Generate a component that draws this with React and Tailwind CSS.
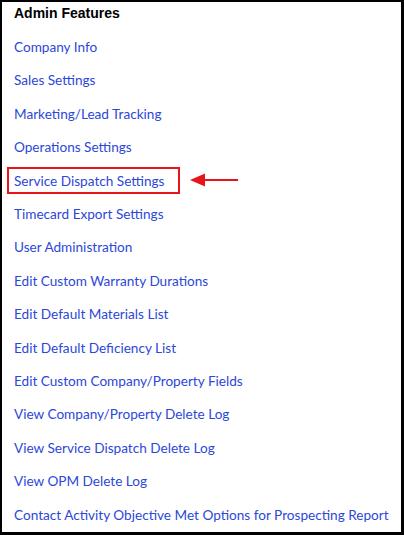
import React from "react";

const links = [
  "Company Info",
  "Sales Settings",
  "Marketing/Lead Tracking",
  "Operations Settings",
  "Service Dispatch Settings",
  "Timecard Export Settings",
  "User Administration",
  "Edit Custom Warranty Durations",
  "Edit Default Materials List",
  "Edit Default Deficiency List",
  "Edit Custom Company/Property Fields",
  "View Company/Property Delete Log",
  "View Service Dispatch Delete Log",
  "View OPM Delete Log",
  "Contact Activity Objective Met Options for Prospecting Report",
];

export default function App() {
  return (
    <div className="w-[404px] h-[535px] bg-white border-l-2 border-t-2 border-r-[3px] border-b-[3px] border-black overflow-hidden">
      <div className="h-[22px] flex items-center pl-3 font-['Liberation_Sans',Arial,sans-serif] font-bold text-[14px] text-black">
        Admin Features
      </div>
      <div className="mt-[6.3px] flex flex-col">
        {links.map((label) => (
          <div key={label} className="relative h-[33.43px] flex items-center pl-3">
            <a
              href="#"
              className="font-['Lato',sans-serif] text-[13.6px] text-[#2c48d8] whitespace-nowrap"
            >
              {label}
            </a>
            {label === "Service Dispatch Settings" && (
              <>
                <span className="absolute left-[5px] top-[3px] w-[173px] h-[27px] border-2 border-[#e8141b]" />
                <svg
                  className="absolute left-[187px] top-[8px]"
                  width="52"
                  height="16"
                  viewBox="0 0 52 16"
                >
                  <line x1="14" y1="8" x2="49" y2="8" stroke="#e8141b" strokeWidth="2.2" />
                  <polygon points="1,8 16,1.5 16,14.5" fill="#e8141b" />
                </svg>
              </>
            )}
          </div>
        ))}
      </div>
    </div>
  );
}
